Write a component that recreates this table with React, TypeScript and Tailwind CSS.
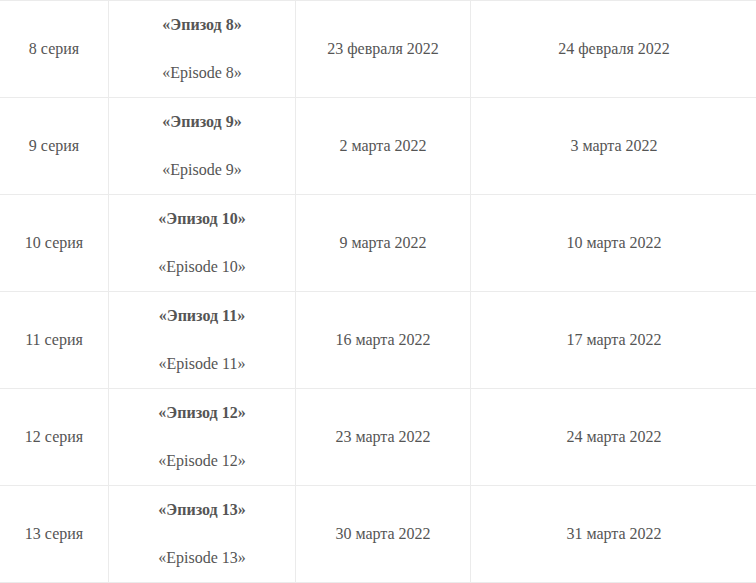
import React from "react";

const rows = [
  { n: "8", a: "23 февраля 2022", b: "24 февраля 2022" },
  { n: "9", a: "2 марта 2022", b: "3 марта 2022" },
  { n: "10", a: "9 марта 2022", b: "10 марта 2022" },
  { n: "11", a: "16 марта 2022", b: "17 марта 2022" },
  { n: "12", a: "23 марта 2022", b: "24 марта 2022" },
  { n: "13", a: "30 марта 2022", b: "31 марта 2022" },
];

export default function App() {
  return (
    <div className="bg-white min-h-[583px] w-[756px] overflow-hidden text-[#555] text-[16px] leading-[24px] font-['Liberation_Serif','Times_New_Roman',serif]">
      <div className="grid grid-cols-[109px_187px_175px_1fr] border-t border-[#ebebeb] w-[758px]">
        {rows.map((r) => (
          <React.Fragment key={r.n}>
            <div className="border-r border-b border-[#ebebeb] h-[97px] flex items-center justify-center text-center">
              {r.n} серия
            </div>
            <div className="border-r border-b border-[#ebebeb] h-[97px] flex flex-col justify-center items-center text-center py-3">
              <div className="font-bold">«Эпизод {r.n}»</div>
              <div className="h-6" />
              <div>«Episode {r.n}»</div>
            </div>
            <div className="border-r border-b border-[#ebebeb] h-[97px] flex items-center justify-center text-center">
              {r.a}
            </div>
            <div className="border-r border-b border-[#ebebeb] h-[97px] flex items-center justify-center text-center">
              {r.b}
            </div>
          </React.Fragment>
        ))}
      </div>
    </div>
  );
}
